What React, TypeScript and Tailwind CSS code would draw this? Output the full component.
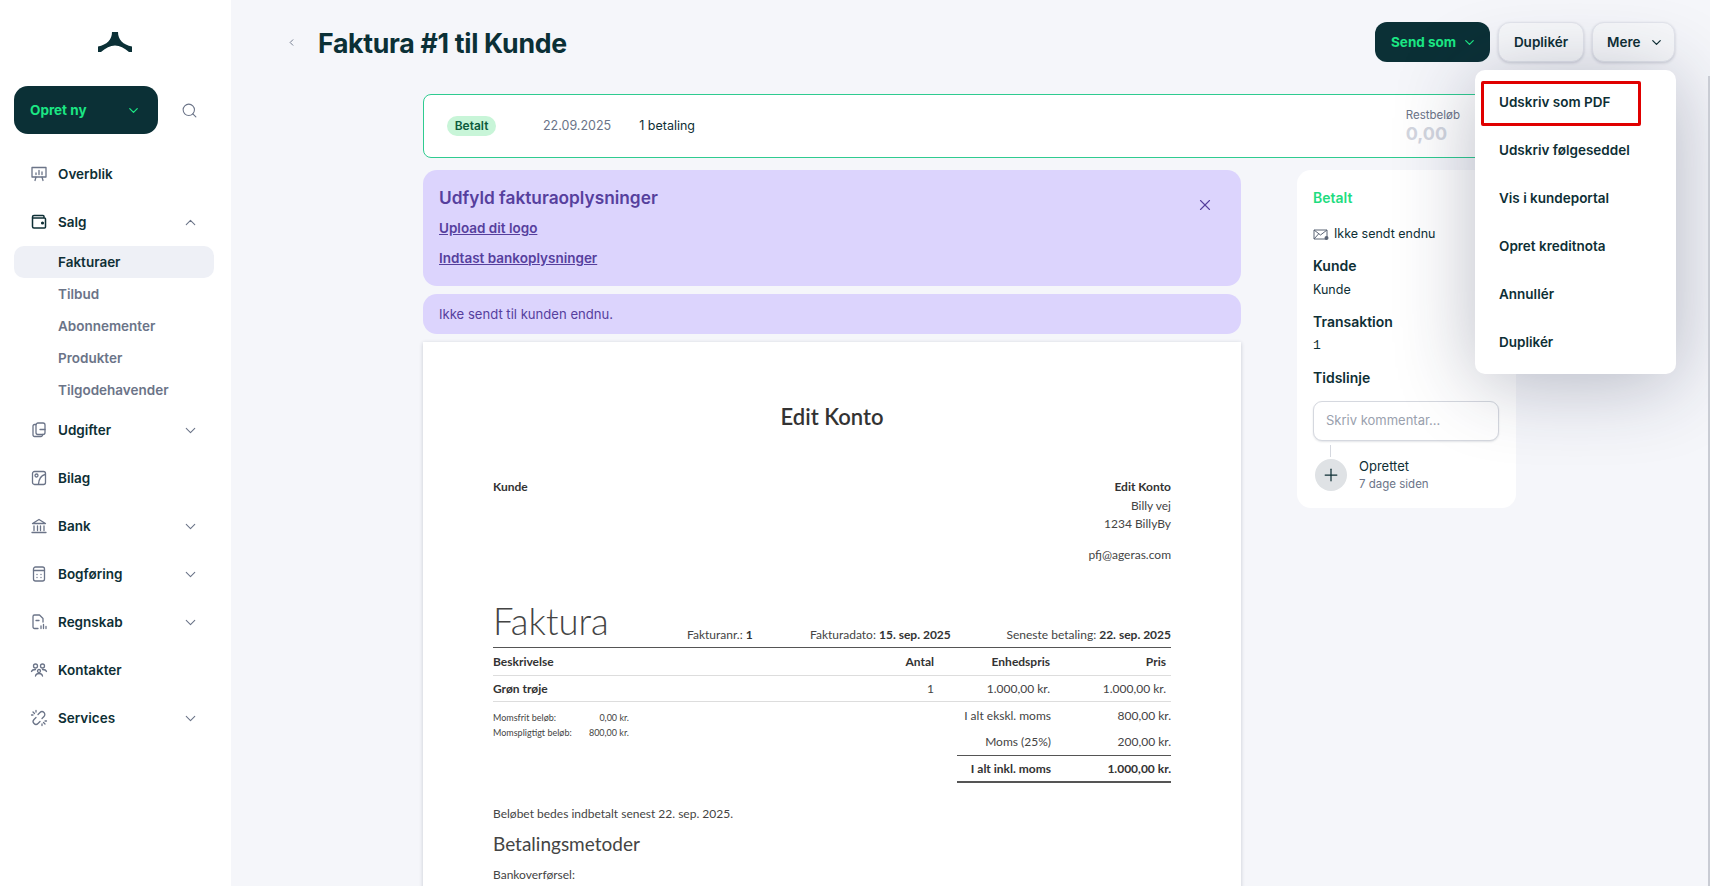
import { ChevronDown, ChevronLeft, ChevronUp, Plus, Search, X } from "lucide-react";
import type { ReactNode } from "react";

const Ico = ({ children }: { children: ReactNode }) => (
  <svg width="18" height="18" viewBox="0 0 18 18" fill="none" stroke="#6b7488" strokeWidth="1.3" strokeLinecap="round" strokeLinejoin="round">
    {children}
  </svg>
);

const navTop = [
  {
    label: "Overblik",
    icon: (
      <Ico>
        <path d="M2 2.500h14v9.500H2z" />
        <path d="M6 9.500V8M9 9.500V5.500M12 9.500V7M6 12l-1 3.500M12 12l1 3.500" />
      </Ico>
    ),
  },
];

const navBottom = [
  {
    label: "Udgifter",
    arrow: true,
    icon: (
      <Ico>
        <path d="M6 3.500H4.500A1.500 1.500 0 0 0 3 5v9a1.500 1.500 0 0 0 1.500 1.500H11A1.500 1.500 0 0 0 12.500 14v-.5" />
        <rect x="6" y="2" width="9" height="11.500" rx="2" />
        <path d="M10 8.500h5" />
      </Ico>
    ),
  },
  {
    label: "Bilag",
    icon: (
      <Ico>
        <rect x="2.500" y="2.500" width="13" height="13" rx="2" />
        <circle cx="6.500" cy="6.500" r="1.500" />
        <path d="M15 5.500c-4 1-6 4-6.500 9.500" />
      </Ico>
    ),
  },
  {
    label: "Bank",
    arrow: true,
    icon: (
      <Ico>
        <path d="M2.500 6.500 9 2.500l6.500 4zM4 9v4.500M7.500 9v4.500M10.500 9v4.500M14 9v4.500M2 15.500h14" />
      </Ico>
    ),
  },
  {
    label: "Bogføring",
    arrow: true,
    icon: (
      <Ico>
        <rect x="3.500" y="2" width="11" height="14" rx="2" />
        <path d="M3.500 5.500h11M7 9.500h.01M11 9.500h.01M7 12.500h.01M11 12.500h.01" />
      </Ico>
    ),
  },
  {
    label: "Regnskab",
    arrow: true,
    icon: (
      <Ico>
        <path d="M8 15.500H4.500a1.500 1.500 0 0 1-1.500-1.500V3.500A1.500 1.500 0 0 1 4.500 2h5L13 5.500V9" />
        <path d="M6 7.500h3M11 15.500V13M13.500 15.500v-4M16 15.500v-2" />
      </Ico>
    ),
  },
  {
    label: "Kontakter",
    icon: (
      <Ico>
        <circle cx="5.500" cy="5" r="2" />
        <circle cx="12.500" cy="5" r="2" />
        <circle cx="9" cy="10" r="1.500" />
        <path d="M1.500 10.500c.5-1.500 2-2 4-2M16.500 10.500c-.5-1.500-2-2-4-2M5.500 15c.3-1.800 1.700-2.500 3.500-2.500s3.200.7 3.500 2.500" />
      </Ico>
    ),
  },
  {
    label: "Services",
    arrow: true,
    icon: (
      <Ico>
        <path d="M8 5.500 10 3.500a2.800 2.800 0 0 1 4 4l-2 2M10 12.500l-2 2a2.800 2.800 0 0 1-4-4l2-2" />
        <path d="M3 3l1.500 1.500M6 1.500V3M1.500 6H3M15 15l-1.500-1.500M12 16.500V15M16.500 12H15" />
      </Ico>
    ),
  },
];

const subItems = ["Tilbud", "Abonnementer", "Produkter", "Tilgodehavender"];
const menuItems = ["Udskriv følgeseddel", "Vis i kundeportal", "Opret kreditnota", "Annullér", "Duplikér"];

const NavRow = ({ label, icon, arrow }: { label: string; icon: ReactNode; arrow?: boolean }) => (
  <div className="flex h-12 items-center pl-[30px] pr-[32px]">
    <span className="flex w-[28px] shrink-0">{icon}</span>
    <span className="flex-1 text-[13.5px] font-semibold text-[#0e2f35]">{label}</span>
    {arrow && <ChevronDown size={17} className="text-[#6b7488]" strokeWidth={1.5} />}
  </div>
);

const Sidebar = () => (
  <aside className="flex h-[886px] w-[231px] shrink-0 flex-col bg-white">
    <div className="flex h-[86px] justify-center pt-8">
      <svg width="34" height="20" viewBox="0 0 34 20" className="-translate-x-px">
        <path d="M14 0C14 8 9 12.500 0 14.500V20H3C8 16 12 13.500 17 13.500S26 16 31 20H34V14.500C25 12.500 20 8 20 0z" fill="#0b3036" />
      </svg>
    </div>
    <div className="flex items-center pl-[14px]">
      <div className="flex h-12 w-[144px] items-center justify-between rounded-[14px] bg-[#0b3036] pl-4 pr-[17px] text-[13.5px] font-bold text-[#1be784]">
        Opret ny
        <ChevronDown size={15} strokeWidth={2} />
      </div>
      <Search size={17} className="ml-[23px] text-[#6b7488]" strokeWidth={1.5} />
    </div>
    <nav className="mt-4 flex flex-col">
      <NavRow {...navTop[0]} />
      <div className="flex h-12 items-center pl-[30px] pr-[32px]">
        <span className="flex w-[28px] shrink-0">
          <svg width="18" height="18" viewBox="0 0 18 18" fill="none" stroke="#0e2f35" strokeWidth="1.500" strokeLinejoin="round" strokeLinecap="round">
            <path d="M14 5V3.500a1 1 0 0 0-1-1H4A1.500 1.500 0 0 0 2.500 4v9.500A1.500 1.500 0 0 0 4 15h10.500a1 1 0 0 0 1-1V6a1 1 0 0 0-1-1H3" />
            <circle cx="12.500" cy="10" r=".8" fill="#0e2f35" />
          </svg>
        </span>
        <span className="flex-1 text-[13.5px] font-semibold text-[#0e2f35]">Salg</span>
        <ChevronUp size={17} className="text-[#6b7488]" strokeWidth={1.5} />
      </div>
      <div className="ml-[14px] flex h-8 w-[200px] items-center rounded-[10px] bg-[#eef0f6] pl-[44px] text-[13.5px] font-semibold text-[#0e2f35]">
        Fakturaer
      </div>
      {subItems.map((s) => (
        <div key={s} className="flex h-8 items-center pl-[58px] text-[13.5px] font-semibold text-[#6b7488]">
          {s}
        </div>
      ))}
      {navBottom.map((n) => (
        <NavRow key={n.label} {...n} />
      ))}
    </nav>
  </aside>
);

const Header = () => (
  <header className="flex h-[86px] items-center pb-[2px] pl-[55px] pr-[35px]">
    <ChevronLeft size={11} className="text-[#6b7488]" />
    <h1 className="ml-[21px] mt-[2px] flex-1 text-[26.7px] font-bold tracking-[-0.3px] text-[#0b3036]">Faktura #1 til Kunde</h1>
    <div className="flex gap-2 text-[13.5px] font-semibold">
      <div className="flex h-10 w-[115px] items-center gap-[6px] rounded-[12px] bg-[#0b3036] pl-4 font-bold text-[#1be784]">
        Send som
        <ChevronDown size={15} strokeWidth={2} />
      </div>
      <div className="flex h-10 w-[86px] items-center justify-center rounded-[12px] border border-[#e3e5ec] bg-[#f7f8fa] text-[#0e2f35] shadow-[0_1px_3px_rgba(20,30,60,0.18)]">
        Duplikér
      </div>
      <div className="flex h-10 w-[83px] items-center gap-[9px] rounded-[12px] border border-[#e3e5ec] bg-[#f7f8fa] pl-[14px] text-[#0e2f35] shadow-[0_1px_3px_rgba(20,30,60,0.18)]">
        Mere
        <ChevronDown size={15} strokeWidth={2} />
      </div>
    </div>
  </header>
);

const StatusCard = () => (
  <div className="mt-2 flex h-16 items-center rounded-[8px] border border-[#2fcb90] bg-white pl-[23px] pr-6">
    <span className="flex h-5 w-[49px] items-center justify-center rounded-full bg-[#c8f5d8] text-[12px] font-semibold text-[#0c5b3c]">Betalt</span>
    <span className="ml-[47px] text-[12.500px] text-[#6b7488]">22.09.2025</span>
    <span className="ml-[28px] text-[12.500px] text-[#0e2f35]">1 betaling</span>
    <div className="ml-auto mr-[31px] flex flex-col">
      <span className="text-[11.500px] leading-[15px] text-[#6b7488]">Restbeløb</span>
      <span className="mt-px text-[18px] font-bold leading-5 text-[#d3d6df]">0,00</span>
    </div>
  </div>
);

const Notices = () => (
  <>
    <div className="relative h-[116px] rounded-[14px] bg-[#dcd4fd] pl-4 pt-4 text-[#563f9d]">
      <div className="text-[17.3px] font-semibold leading-[24px]">Udfyld fakturaoplysninger</div>
      <div className="mt-[9px] text-[13.5px] font-semibold leading-[18px] underline">Upload dit logo</div>
      <div className="mt-3 text-[13.5px] font-semibold leading-[18px] underline">Indtast bankoplysninger</div>
      <X size={18} strokeWidth={1.5} className="absolute right-[27px] top-[26px] text-[#563f9d]" />
    </div>
    <div className="mt-2 flex h-10 items-center rounded-[14px] bg-[#dcd4fd] pl-4 pt-[2px] text-[13.100px] text-[#563f9d]">Ikke sendt til kunden endnu.</div>
  </>
);

const Invoice = () => (
  <div className="mt-2 h-[900px] bg-white px-[70px] pt-[60px] font-['Lato',sans-serif] text-[12px] text-[#444] shadow-[0_1px_4px_rgba(20,30,60,0.2)]">
    <div className="text-center text-[22px] font-semibold leading-[30px] text-[#333]">Edit Konto</div>
    <div className="mt-[46px] flex justify-between">
      <div className="font-bold leading-[18px] text-[#333]">Kunde</div>
      <div className="text-right leading-[18.500px]">
        <div className="font-bold text-[#333]">Edit Konto</div>
        <div>Billy vej</div>
        <div>1234 BillyBy</div>
        <div className="mt-3">pfj@ageras.com</div>
      </div>
    </div>
    <div className="mt-[34px] flex items-end border-b border-[#555] pb-[3px]">
      <div className="w-[194px] text-[36.500px] font-light leading-[46px] text-[#444]">Faktura</div>
      <div className="w-[123px]">Fakturanr.: <b className="text-[#333]">1</b></div>
      <div>Fakturadato: <b className="text-[#333]">15. sep. 2025</b></div>
      <div className="ml-auto">Seneste betaling: <b className="text-[#333]">22. sep. 2025</b></div>
    </div>
    <div className="flex h-[28px] items-center border-b border-[#ddd] pr-[5px] font-bold text-[#333]">
      <div className="flex-1">Beskrivelse</div>
      <div className="w-[60px] text-right">Antal</div>
      <div className="w-[116px] text-right">Enhedspris</div>
      <div className="w-[116px] text-right">Pris</div>
    </div>
    <div className="flex h-[26px] items-center border-b border-[#ddd] pr-[5px]">
      <div className="flex-1 font-bold text-[#333]">Grøn trøje</div>
      <div className="w-[60px] text-right">1</div>
      <div className="w-[116px] text-right">1.000,00 kr.</div>
      <div className="w-[116px] text-right">1.000,00 kr.</div>
    </div>
    <div className="flex">
      <div className="flex-1 pt-[8px] text-[9px] leading-[15px]">
        <div className="flex w-[136px] justify-between"><span>Momsfrit beløb:</span><span>0,00 kr.</span></div>
        <div className="flex w-[136px] justify-between"><span>Momspligtigt beløb:</span><span>800,00 kr.</span></div>
      </div>
      <div className="w-[214px]">
        <div className="flex h-[27px] items-center justify-between"><span className="w-[94px] whitespace-nowrap text-right">I alt ekskl. moms</span><span>800,00 kr.</span></div>
        <div className="flex h-[27px] items-center justify-between border-b border-[#555]"><span className="w-[94px] whitespace-nowrap text-right">Moms (25%)</span><span>200,00 kr.</span></div>
        <div className="flex h-[27px] items-center justify-between border-b-2 border-[#555] font-bold text-[#333]"><span className="w-[94px] whitespace-nowrap text-right">I alt inkl. moms</span><span>1.000,00 kr.</span></div>
      </div>
    </div>
    <div className="mt-[22px] leading-[18px]">Beløbet bedes indbetalt senest 22. sep. 2025.</div>
    <div className="mt-[8px] text-[19px] leading-[26px] text-[#444]">Betalingsmetoder</div>
    <div className="mt-[9px] leading-[18px]">Bankoverførsel:</div>
  </div>
);

const SidePanel = () => (
  <aside className="ml-[56px] h-[338px] w-[219px] shrink-0 rounded-[14px] bg-white pl-4 pr-[17px] pt-[18px] text-[#0e2f35]">
    <div className="text-[14px] font-semibold leading-[20px] text-[#1fdc80]">Betalt</div>
    <div className="mt-[17px] flex items-center gap-[5px] text-[12.500px] leading-[18px]">
      <svg width="16" height="14" viewBox="0 0 16 14" fill="none" stroke="#5b6475" strokeWidth="1">
        <path d="M1 3h13v9H1zM1 3l6.500 5L14 3M1 12l4.500-5" />
        <circle cx="13.500" cy="11" r="2" fill="#5b6475" stroke="none" />
      </svg>
      Ikke sendt endnu
    </div>
    <div className="mt-[13px] text-[14px] font-semibold leading-[20px]">Kunde</div>
    <div className="mt-[5px] text-[12.500px] leading-[18px]">Kunde</div>
    <div className="mt-[13px] text-[14px] font-semibold leading-[20px]">Transaktion</div>
    <div className="mt-[5px] font-['Liberation_Mono',monospace] text-[13px] leading-[18px]">1</div>
    <div className="mt-[13px] text-[14px] font-semibold leading-[20px]">Tidslinje</div>
    <div className="mt-[13px] flex h-10 items-center rounded-[9px] border border-[#d5d8df] bg-white pl-[12px] text-[13px] text-[#9aa1ae] shadow-[0_1px_2px_rgba(20,30,60,0.12)]">
      Skriv kommentar...
    </div>
    <div className="ml-[17px] mt-[4px] h-3 w-px bg-[#d5d8df]" />
    <div className="ml-[2px] flex items-center gap-[12px]">
      <div className="flex h-8 w-8 items-center justify-center rounded-full bg-[#dfe2e5]">
        <Plus size={20} strokeWidth={1.5} className="text-[#0e2f35]" />
      </div>
      <div>
        <div className="text-[13px] leading-[18px]">Oprettet</div>
        <div className="text-[11.500px] leading-[18px] text-[#6b7488]">7 dage siden</div>
      </div>
    </div>
  </aside>
);

const MoreMenu = () => (
  <div className="absolute left-[1475px] top-[70px] w-[201px] rounded-[10px] bg-white py-2 text-[13.5px] font-semibold text-[#0e2f35] shadow-[0_8px_80px_rgba(30,35,70,0.3)]">
    <div className="relative flex h-12 items-center pl-6">
      Udskriv som PDF
      <div className="absolute left-[6px] top-[3px] h-[45px] w-[160px] rounded-[2px] border-[3px] border-[#e00000]" />
    </div>
    {menuItems.map((m) => (
      <div key={m} className="flex h-12 items-center pl-6">
        {m}
      </div>
    ))}
  </div>
);

export default function App() {
  return (
    <div className="relative flex h-[886px] overflow-hidden bg-[#f5f6fa] font-['Inter',sans-serif]">
      <Sidebar />
      <main className="min-w-0 flex-1">
        <Header />
        <div className="pl-[192px] pr-[194px]">
          <StatusCard />
          <div className="mt-3 flex">
            <div className="w-[818px] shrink-0">
              <Notices />
              <Invoice />
            </div>
            <SidePanel />
          </div>
        </div>
      </main>
      <MoreMenu />
      {/* scrollbar sliver on the right edge */}
      <div className="absolute bottom-0 right-0 top-[76px] w-[2px] bg-[#c9ccd4]" />
    </div>
  );
}
